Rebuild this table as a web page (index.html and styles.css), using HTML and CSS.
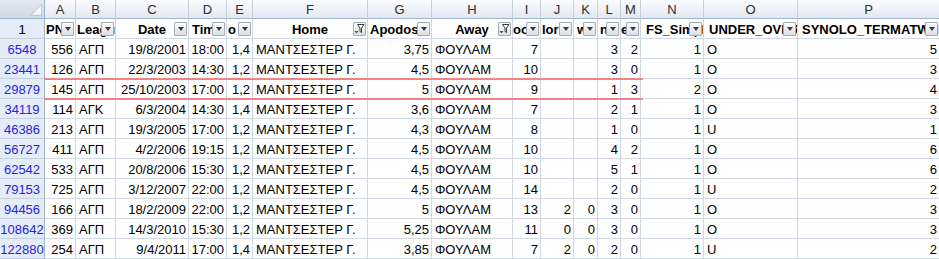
FILE: index.html
```html
<!DOCTYPE html>
<html lang="el">
<head>
<meta charset="utf-8">
<title>Sheet</title>
<link rel="stylesheet" href="styles.css">
</head>
<body>
<div class="wrap">
<div class="sheet">
  <div class="corner"><svg width="45" height="18" viewBox="0 0 45 18"><polygon points="42.5,4.5 42.5,15.5 31.5,15.5" fill="#f4f7fb" stroke="#b9c6d6" stroke-width="1"/></svg></div>
  <div class="col">A</div><div class="col">B</div><div class="col">C</div><div class="col">D</div><div class="col">E</div><div class="col">F</div><div class="col">G</div><div class="col">H</div><div class="col">I</div><div class="col">J</div><div class="col">K</div><div class="col">L</div><div class="col">M</div><div class="col">N</div><div class="col">O</div><div class="col">P</div>

  <div class="rh k">1</div>
  <div class="h p1">PN<span class="dd"></span></div>
  <div class="h p1">League<span class="dd"></span></div>
  <div class="h hc">Date<span class="dd"></span></div>
  <div class="h p3">Time<span class="dd"></span></div>
  <div class="h p1">o<span class="dd"></span></div>
  <div class="h hc">Home<span class="ff"><svg width="11" height="12" viewBox="0 0 11 12"><path d="M3.5 1.5 H10 L7.5 5 V9.5 L6 8.5 V5 Z" fill="#fff" stroke="#3c3c3c" stroke-width="1"/><path d="M0.5 8 H4.5 L2.5 10.5 Z" fill="#2f5597"/></svg></span></div>
  <div class="h p2">Apodosi<span class="dd"></span></div>
  <div class="h hc">Away<span class="ff"><svg width="11" height="12" viewBox="0 0 11 12"><path d="M3.5 1.5 H10 L7.5 5 V9.5 L6 8.5 V5 Z" fill="#fff" stroke="#3c3c3c" stroke-width="1"/><path d="M0.5 8 H4.5 L2.5 10.5 Z" fill="#2f5597"/></svg></span></div>
  <div class="h p0">oo<span class="dd"></span></div>
  <div class="h p1">lor<span class="dd"></span></div>
  <div class="h p3">w<span class="dd"></span></div>
  <div class="h p2">n<span class="dd"></span></div>
  <div class="h p0">e<span class="dd"></span></div>
  <div class="h p5">FS_Simple<span class="dd"></span></div>
  <div class="h p5">UNDER_OVER<span class="dd"></span></div>
  <div class="h p4">SYNOLO_TERMATWN<span class="dd"></span></div>

  <div class="rh">6548</div><div class="n">556</div><div class="t">ΑΓΠ</div><div class="n">19/8/2001</div><div class="n">18:00</div><div class="n">1,4</div><div class="t">ΜΑΝΤΣΕΣΤΕΡ Γ.</div><div class="n">3,75</div><div class="t">ΦΟΥΛΑΜ</div><div class="n">7</div><div class="n"></div><div class="n"></div><div class="n">3</div><div class="n">2</div><div class="n">1</div><div class="t">O</div><div class="n">5</div>
  <div class="rh">23441</div><div class="n">126</div><div class="t">ΑΓΠ</div><div class="n">22/3/2003</div><div class="n">14:30</div><div class="n">1,2</div><div class="t">ΜΑΝΤΣΕΣΤΕΡ Γ.</div><div class="n">4,5</div><div class="t">ΦΟΥΛΑΜ</div><div class="n">10</div><div class="n"></div><div class="n"></div><div class="n">3</div><div class="n">0</div><div class="n">1</div><div class="t">O</div><div class="n">3</div>
  <div class="rh">29879</div><div class="n">145</div><div class="t">ΑΓΠ</div><div class="n">25/10/2003</div><div class="n">17:00</div><div class="n">1,2</div><div class="t">ΜΑΝΤΣΕΣΤΕΡ Γ.</div><div class="n">5</div><div class="t">ΦΟΥΛΑΜ</div><div class="n">9</div><div class="n"></div><div class="n"></div><div class="n">1</div><div class="n">3</div><div class="n">2</div><div class="t">O</div><div class="n">4</div>
  <div class="rh">34119</div><div class="n">114</div><div class="t">ΑΓΚ</div><div class="n">6/3/2004</div><div class="n">14:30</div><div class="n">1,4</div><div class="t">ΜΑΝΤΣΕΣΤΕΡ Γ.</div><div class="n">3,6</div><div class="t">ΦΟΥΛΑΜ</div><div class="n">7</div><div class="n"></div><div class="n"></div><div class="n">2</div><div class="n">1</div><div class="n">1</div><div class="t">O</div><div class="n">3</div>
  <div class="rh">46386</div><div class="n">213</div><div class="t">ΑΓΠ</div><div class="n">19/3/2005</div><div class="n">17:00</div><div class="n">1,2</div><div class="t">ΜΑΝΤΣΕΣΤΕΡ Γ.</div><div class="n">4,3</div><div class="t">ΦΟΥΛΑΜ</div><div class="n">8</div><div class="n"></div><div class="n"></div><div class="n">1</div><div class="n">0</div><div class="n">1</div><div class="t">U</div><div class="n">1</div>
  <div class="rh">56727</div><div class="n">411</div><div class="t">ΑΓΠ</div><div class="n">4/2/2006</div><div class="n">19:15</div><div class="n">1,2</div><div class="t">ΜΑΝΤΣΕΣΤΕΡ Γ.</div><div class="n">4,5</div><div class="t">ΦΟΥΛΑΜ</div><div class="n">10</div><div class="n"></div><div class="n"></div><div class="n">4</div><div class="n">2</div><div class="n">1</div><div class="t">O</div><div class="n">6</div>
  <div class="rh">62542</div><div class="n">533</div><div class="t">ΑΓΠ</div><div class="n">20/8/2006</div><div class="n">15:30</div><div class="n">1,2</div><div class="t">ΜΑΝΤΣΕΣΤΕΡ Γ.</div><div class="n">4,5</div><div class="t">ΦΟΥΛΑΜ</div><div class="n">10</div><div class="n"></div><div class="n"></div><div class="n">5</div><div class="n">1</div><div class="n">1</div><div class="t">O</div><div class="n">6</div>
  <div class="rh">79153</div><div class="n">725</div><div class="t">ΑΓΠ</div><div class="n">3/12/2007</div><div class="n">22:00</div><div class="n">1,2</div><div class="t">ΜΑΝΤΣΕΣΤΕΡ Γ.</div><div class="n">4,5</div><div class="t">ΦΟΥΛΑΜ</div><div class="n">14</div><div class="n"></div><div class="n"></div><div class="n">2</div><div class="n">0</div><div class="n">1</div><div class="t">U</div><div class="n">2</div>
  <div class="rh">94456</div><div class="n">166</div><div class="t">ΑΓΠ</div><div class="n">18/2/2009</div><div class="n">22:00</div><div class="n">1,2</div><div class="t">ΜΑΝΤΣΕΣΤΕΡ Γ.</div><div class="n">5</div><div class="t">ΦΟΥΛΑΜ</div><div class="n">13</div><div class="n">2</div><div class="n">0</div><div class="n">3</div><div class="n">0</div><div class="n">1</div><div class="t">O</div><div class="n">3</div>
  <div class="rh">108642</div><div class="n">369</div><div class="t">ΑΓΠ</div><div class="n">14/3/2010</div><div class="n">15:30</div><div class="n">1,2</div><div class="t">ΜΑΝΤΣΕΣΤΕΡ Γ.</div><div class="n">5,25</div><div class="t">ΦΟΥΛΑΜ</div><div class="n">11</div><div class="n">0</div><div class="n">0</div><div class="n">3</div><div class="n">0</div><div class="n">1</div><div class="t">O</div><div class="n">3</div>
  <div class="rh">122880</div><div class="n">254</div><div class="t">ΑΓΠ</div><div class="n">9/4/2011</div><div class="n">17:00</div><div class="n">1,4</div><div class="t">ΜΑΝΤΣΕΣΤΕΡ Γ.</div><div class="n">3,85</div><div class="t">ΦΟΥΛΑΜ</div><div class="n">7</div><div class="n">2</div><div class="n">0</div><div class="n">2</div><div class="n">0</div><div class="n">1</div><div class="t">U</div><div class="n">2</div>
</div>
<div class="mark"></div>
</div>
</body>
</html>
```

FILE: styles.css
```css
html, body {
  margin: 0;
  padding: 0;
  overflow: hidden;
  background: #ffffff;
}

body {
  font-family: "Liberation Sans", Arial, sans-serif;
  font-size: 13px;
  color: #000000;
}

.wrap {
  position: relative;
}

.sheet {
  display: grid;
  grid-template-columns: 45px 31px 40px 73px 38px 26px 115px 64px 81px 28px 33px 24px 23px 20px 63px 94px 142px;
  grid-template-rows: 19px repeat(12, 20px);
  width: max-content;
}

.sheet > div {
  box-sizing: border-box;
  border-right: 1px solid #d0d7e5;
  border-bottom: 1px solid #d0d7e5;
  overflow: hidden;
  white-space: nowrap;
  display: flex;
  align-items: flex-end;
  line-height: 15px;
  padding-bottom: 1px;
  position: relative;
}

.sheet > .corner {
  padding: 0;
  background: linear-gradient(#e3e9f1, #cfd9e6);
  border-right-color: #9eb6ce;
  border-bottom-color: #9eb6ce;
}

.corner svg {
  display: block;
}

.sheet > .col {
  justify-content: center;
  align-items: center;
  padding: 0;
  background: linear-gradient(#fafbfd, #e3e9f2);
  border-right-color: #c6cfdc;
  border-bottom-color: #9eb6ce;
  color: #2e2e2e;
}

.sheet > .rh {
  justify-content: center;
  background: #e4ecf7;
  border-right-color: #9eb6ce;
  border-bottom-color: #c3d0e2;
  color: #2424e4;
}

.sheet > .rh.k {
  color: #000000;
}

.n {
  justify-content: flex-end;
  padding-right: 2px;
}

.t {
  padding-left: 3px;
}

.h {
  font-weight: bold;
}

.hc {
  justify-content: center;
}

.p0 { padding-left: 0; }
.p1 { padding-left: 1px; }
.p2 { padding-left: 2px; }
.p3 { padding-left: 3px; }
.p4 { padding-left: 4px; }
.p5 { padding-left: 5px; }

.dd, .ff {
  position: absolute;
  right: 1px;
  bottom: 2px;
  width: 13px;
  height: 14px;
  box-sizing: border-box;
  border: 1px solid #a1aab6;
  border-radius: 1px;
  background: linear-gradient(#fdfdfe, #dbe0e7);
  display: flex;
  align-items: center;
  justify-content: center;
}

.dd::after {
  content: "";
  width: 0;
  height: 0;
  border-left: 3.5px solid transparent;
  border-right: 3.5px solid transparent;
  border-top: 4px solid #3a3a3a;
}

.ff svg {
  display: block;
}

.mark {
  position: absolute;
  left: 44px;
  top: 78px;
  width: 599px;
  height: 22px;
  box-sizing: border-box;
  border-top: 2px solid #f08484;
  border-bottom: 2px solid #f08484;
  pointer-events: none;
}
```
